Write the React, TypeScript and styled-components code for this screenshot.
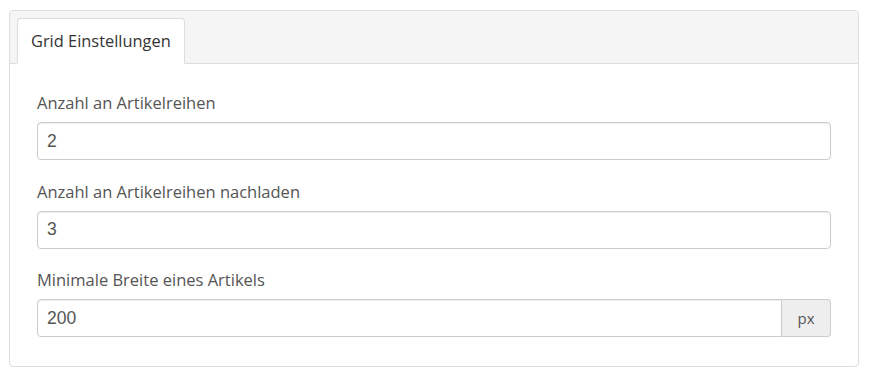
import styled, { createGlobalStyle } from 'styled-components';

const GlobalStyle = createGlobalStyle`
  body {
    margin: 0;
    padding: 10px 11px 9px 9px;
    background: #fff;
    font-family: "Open Sans", "Liberation Sans", sans-serif;
  }
`;

const Panel = styled.section`
  border: 1px solid #ddd;
  border-radius: 4px;
  background: #fff;
`;

const TabBar = styled.ul`
  display: flex;
  margin: 0;
  padding: 7px 7px 0;
  list-style: none;
  background: #f5f5f5;
  border-bottom: 1px solid #ddd;
  border-radius: 4px 4px 0 0;
`;

const Tab = styled.li<{ active?: boolean }>`
  margin-bottom: -1px;
  padding: 11px 13px 12px;
  font-size: 16.4px;
  line-height: 21px;
  color: #333;
  background: ${(p) => (p.active ? '#fff' : 'transparent')};
  border: 1px solid ${(p) => (p.active ? '#ddd' : 'transparent')};
  border-bottom-color: transparent;
  border-radius: 4px 4px 0 0;
`;

const Body = styled.div`
  padding: 28px 27px 29px;
`;

const Group = styled.div`
  margin-bottom: 20.5px;

  &:last-child {
    margin-bottom: 0;
  }
`;

const Label = styled.label`
  display: block;
  margin-bottom: 8px;
  font-size: 16.5px;
  line-height: 22px;
  color: #555;
`;

const InputRow = styled.div`
  display: flex;
`;

const Input = styled.input<{ joined?: boolean }>`
  flex: 1;
  min-width: 0;
  height: 38px;
  box-sizing: border-box;
  padding: 6px 9px;
  font-family: "Liberation Sans", Arial, sans-serif;
  font-size: 17.5px;
  color: #555;
  border: 1px solid #ccc;
  border-radius: ${(p) => (p.joined ? '4px 0 0 4px' : '4px')};
  box-shadow: inset 0 1px 1px rgba(0, 0, 0, 0.075);
  outline: none;
`;

const Addon = styled.span`
  display: flex;
  align-items: center;
  justify-content: center;
  width: 49px;
  height: 38px;
  box-sizing: border-box;
  font-size: 15px;
  color: #555;
  background: #eee;
  border: 1px solid #ccc;
  border-left: 0;
  border-radius: 0 4px 4px 0;
`;

const fields = [
  { label: 'Anzahl an Artikelreihen', value: '2' },
  { label: 'Anzahl an Artikelreihen nachladen', value: '3' },
  { label: 'Minimale Breite eines Artikels', value: '200', unit: 'px' },
];

export default function App() {
  return (
    <>
      <GlobalStyle />
      <Panel>
        <TabBar>
          <Tab active>Grid Einstellungen</Tab>
        </TabBar>
        <Body>
          {fields.map((f) => (
            <Group key={f.label}>
              <Label>{f.label}</Label>
              <InputRow>
                <Input joined={!!f.unit} defaultValue={f.value} />
                {f.unit && <Addon>{f.unit}</Addon>}
              </InputRow>
            </Group>
          ))}
        </Body>
      </Panel>
    </>
  );
}
